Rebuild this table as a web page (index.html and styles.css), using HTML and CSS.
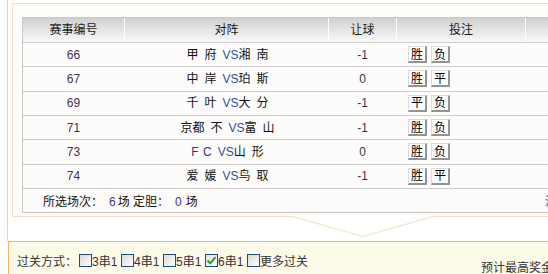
FILE: index.html
```html
<!DOCTYPE html>
<html lang="zh">
<head>
<meta charset="utf-8">
<title>过关投注</title>
<link rel="stylesheet" href="styles.css">
</head>
<body>
<div class="page">
  <div class="main">
    <div class="panel">
      <div class="table">
        <div class="row head">
          <div class="cell">赛事编号</div>
          <div class="cell">对阵</div>
          <div class="cell">让球</div>
          <div class="cell">投注</div>
          <div class="cell"></div>
        </div>
        <div class="row">
          <div class="cell num">66</div>
          <div class="cell team"><span class="names">甲 府 <span class="vs">VS</span>湘 南</span></div>
          <div class="cell num">-1</div>
          <div class="cell bets"><span class="btn">胜</span><span class="btn">负</span></div>
          <div class="cell"></div>
        </div>
        <div class="row">
          <div class="cell num">67</div>
          <div class="cell team"><span class="names">中 岸 <span class="vs">VS</span>珀 斯</span></div>
          <div class="cell num">0</div>
          <div class="cell bets"><span class="btn">胜</span><span class="btn">平</span></div>
          <div class="cell"></div>
        </div>
        <div class="row">
          <div class="cell num">69</div>
          <div class="cell team"><span class="names">千 叶 <span class="vs">VS</span>大 分</span></div>
          <div class="cell num">-1</div>
          <div class="cell bets"><span class="btn">平</span><span class="btn">负</span></div>
          <div class="cell"></div>
        </div>
        <div class="row">
          <div class="cell num">71</div>
          <div class="cell team"><span class="names">京都 不 <span class="vs">VS</span>富 山</span></div>
          <div class="cell num">-1</div>
          <div class="cell bets"><span class="btn">胜</span><span class="btn">负</span></div>
          <div class="cell"></div>
        </div>
        <div class="row">
          <div class="cell num">73</div>
          <div class="cell team"><span class="names"><span class="fc">F C</span> <span class="vs">VS</span>山 形</span></div>
          <div class="cell num">0</div>
          <div class="cell bets"><span class="btn">胜</span><span class="btn">负</span></div>
          <div class="cell"></div>
        </div>
        <div class="row">
          <div class="cell num">74</div>
          <div class="cell team"><span class="names">爱 媛 <span class="vs">VS</span>鸟 取</span></div>
          <div class="cell num">-1</div>
          <div class="cell bets"><span class="btn">胜</span><span class="btn">平</span></div>
          <div class="cell"></div>
        </div>
        <div class="foot">
          <div class="summary">所选场次：<span class="count first">6</span>场 定胆：<span class="count second">0</span>场</div>
          <a class="clear">清空</a>
        </div>
      </div>
      <svg class="notch" width="142" height="22" viewBox="0 0 142 22">
        <polygon points="0,0 71,20.5 141,0" fill="#ffffff"/>
        <polyline points="0,0.5 71,20.5 141,0.5" fill="none" stroke="#f6dfbf" stroke-width="1.2"/>
      </svg>
    </div>
  </div>
  <div class="pass">
    <div class="options">
      <span class="label">过关方式：</span>
      <label class="opt"><span class="box"></span>3串1</label>
      <label class="opt"><span class="box"></span>4串1</label>
      <label class="opt"><span class="box"></span>5串1</label>
      <label class="opt"><span class="box checked"><svg width="11" height="11" viewBox="0 0 11 11"><path d="M1.5 5.5 L4.2 8.3 L9.5 2.2" fill="none" stroke="#2b9a2b" stroke-width="2"/></svg></span>6串1</label>
      <label class="opt more"><span class="box"></span>更多过关</label>
    </div>
    <div class="prize">预计最高奖金</div>
  </div>
</div>
</body>
</html>
```

FILE: styles.css
```css
html, body {
  margin: 0;
  padding: 0;
  background: #ffffff;
  overflow: hidden;
}
body {
  width: 548px;
  height: 274px;
  font-family: "Liberation Sans", "Noto Sans CJK SC", sans-serif;
  font-size: 12px;
  color: #222;
}
.page {
  width: 700px;
}
.main {
  margin-left: 7px;
  border-left: 1px solid #d6d6d6;
  padding: 3px 0 24px 4px;
}
.panel {
  position: relative;
  width: 640px;
  background: #fffdf9;
  border-top: 1px solid #efe0c6;
  border-left: 1px solid #f6e2c4;
  border-bottom: 1px solid #f6dfbf;
  padding: 13px 0 3px 9px;
}
.table {
  border: 1px solid #c8c8c8;
  background: #fdfcfa;
}
.row {
  display: grid;
  grid-template-columns: 101px 204px 68px 129px 120px;
  height: 24.33px;
  border-bottom: 1px solid #cccccc;
  box-sizing: border-box;
}
.row.head {
  height: 25px;
  background: linear-gradient(#d0d0d0, #f9f9f9);
}
.cell {
  display: flex;
  align-items: center;
  justify-content: center;
  box-sizing: border-box;
  border-left: 1px solid transparent;
  white-space: pre;
  line-height: 14px;
}
.cell:first-child {
  border-left: 0;
}
.head .cell {
  border-left-color: #ffffff;
  color: #1a1a1a;
}
.head .cell:first-child {
  border-left: 0;
}
.num {
  color: #3a3550;
}
.team {
  color: #111;
  padding-left: 2px;
}
.names {
  white-space: pre;
  word-spacing: 2.7px;
}
.vs {
  color: #34509a;
  word-spacing: 0;
}
.fc {
  color: #3a2e7a;
  word-spacing: 1px;
}
.bets {
  justify-content: flex-start;
  padding-left: 11px;
  gap: 4px;
}
.btn {
  display: inline-flex;
  align-items: center;
  justify-content: center;
  width: 19px;
  height: 17px;
  box-sizing: border-box;
  background: #ffffff;
  border-top: 1px solid #dcdcdc;
  border-left: 1px solid #dcdcdc;
  border-right: 2px solid #939393;
  border-bottom: 2px solid #939393;
  color: #000;
  font-size: 12px;
  line-height: 12px;
  padding-top: 1px;
}
.foot {
  display: flex;
  align-items: center;
  height: 23px;
  padding-left: 20px;
  color: #111;
}
.summary {
  width: 502px;
  white-space: pre;
}
.count {
  color: #3d3590;
}
.count.first {
  margin: 0 2px 0 6px;
}
.count.second {
  margin: 0 4px 0 6px;
}
.clear {
  color: #3b64a8;
}
.notch {
  position: absolute;
  left: 279px;
  top: 100%;
  display: block;
}
.pass {
  margin-left: 8px;
  border-left: 1px solid #f6b267;
  border-top: 1px solid #f6b267;
  background: #fefae9;
  height: 40px;
  display: flex;
  align-items: flex-start;
  padding: 11px 0 0 8px;
  color: #333;
}
.options {
  display: flex;
  align-items: center;
  width: 464px;
  height: 15px;
}
.label {
  width: 62px;
}
.opt {
  display: flex;
  align-items: center;
  width: 42px;
}
.opt.more {
  width: auto;
  white-space: nowrap;
}
.box {
  width: 13px;
  height: 13px;
  box-sizing: border-box;
  border: 1px solid #1f4c78;
  background: linear-gradient(135deg, #d9d9d9, #ffffff);
  display: flex;
  align-items: center;
  justify-content: center;
}
.box.checked {
  background: linear-gradient(135deg, #e2e2e2, #ffffff);
}
.prize {
  margin-top: 5px;
  white-space: nowrap;
  color: #333;
}
```
